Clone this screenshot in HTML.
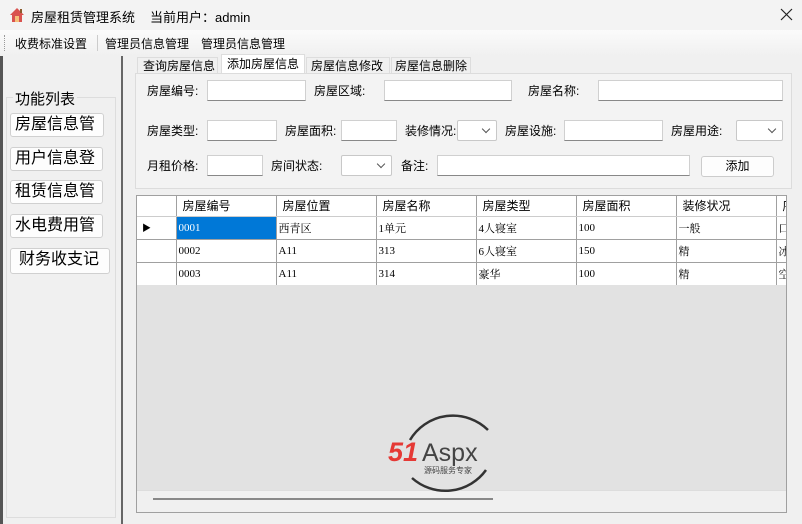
<!DOCTYPE html><html><head><meta charset="utf-8"><style>
*{margin:0;padding:0;box-sizing:border-box}
body{width:802px;height:524px;background:#f0f0f0;font-family:"Liberation Sans","Noto Sans CJK SC",sans-serif;font-size:12px;color:#000;position:relative;overflow:hidden}
.a{position:absolute;white-space:nowrap}
.in{position:absolute;background:#fff;border:1px solid #d0d0d0;border-bottom:1px solid #888;height:21px}
.sel{position:absolute;background:#fff;border:1px solid #c8c8c8;height:21px;border-radius:2px}
.sel:after{content:"";position:absolute;right:7px;top:5px;width:5px;height:5px;border-right:1px solid #555;border-bottom:1px solid #555;transform:rotate(45deg)}
.lb{position:absolute;font-size:12px;white-space:nowrap}
.btn{position:absolute;background:#fdfdfd;border:1px solid #d0d0d0;border-radius:3px;font-size:16px;padding-left:4px;line-height:22px}
table{border-collapse:collapse;position:absolute;left:0;top:0;background:#fff;table-layout:fixed;width:739px}
td{border:1px solid #a0a0a0;border-top:none;border-left:none;height:23px;font-size:11px;padding-left:2px;font-family:"Liberation Serif","Noto Serif CJK SC",serif;overflow:hidden;white-space:nowrap}
tr.h td{height:20px;font-size:12px;padding-left:6px;font-family:"Liberation Sans","Noto Sans CJK SC",sans-serif;border-bottom:1px solid #ccc}
</style></head><body>
<div class="a" style="left:0;top:0;width:802px;height:30px;background:#f3f3f3"></div>
<div class="a" style="left:9px;top:7px;width:16px;height:16px">
<svg width="16" height="16"><polygon points="8,1 1,8 3,8 3,15 13,15 13,8 15,8" fill="#d9534f"/><rect x="6" y="9" width="4" height="6" fill="#f5c07a"/><rect x="11" y="2" width="2" height="4" fill="#8b5a2b"/></svg></div>
<div class="a" style="left:31px;top:7px;font-size:13px">房屋租赁管理系统</div>
<div class="a" style="left:150px;top:7px;font-size:13px">当前用户：admin</div>
<svg class="a" style="left:780px;top:8px" width="13" height="13"><path d="M1 1L12 12M12 1L1 12" stroke="#222" stroke-width="1.2"/></svg>
<div class="a" style="left:0;top:30px;width:802px;height:26px;background:linear-gradient(#fbfbfb,#f0f0f0)"></div>
<div class="a" style="left:4px;top:35px;height:16px;border-left:1px dotted #999"></div>
<div class="a" style="left:15px;top:35px;font-size:12px">收费标准设置</div>
<div class="a" style="left:97px;top:35px;height:16px;border-left:1px solid #ccc"></div>
<div class="a" style="left:105px;top:35px;font-size:12px">管理员信息管理</div>
<div class="a" style="left:201px;top:35px;font-size:12px">管理员信息管理</div>
<div class="a" style="left:0;top:56px;width:3px;height:468px;background:#555"></div>
<div class="a" style="left:6px;top:97px;width:110px;height:421px;border:1px solid #ddd;border-top:none"></div>
<div class="a" style="left:6px;top:97px;width:110px;border-top:1px solid #ddd"></div>
<div class="a" style="left:13px;top:88px;font-size:15px;background:#f0f0f0;padding:0 2px">功能列表</div>
<div class="btn" style="left:10px;top:113px;width:94px;height:24px">房屋信息管</div>
<div class="btn" style="left:10px;top:147px;width:93px;height:24px">用户信息登</div>
<div class="btn" style="left:10px;top:180px;width:93px;height:24px">租赁信息管</div>
<div class="btn" style="left:10px;top:214px;width:93px;height:24px">水电费用管</div>
<div class="btn" style="left:10px;top:248px;width:100px;height:26px;padding-left:8px">财务收支记</div>
<div class="a" style="left:121px;top:56px;width:2px;height:468px;background:#666"></div>
<div class="a" style="left:137px;top:57px;width:81px;height:17px;border:1px solid #ddd;border-bottom:none;padding-left:5px;font-size:12px;line-height:17px">查询房屋信息</div>
<div class="a" style="left:221px;top:54px;width:84px;height:20px;background:#fff;border:1px solid #ddd;border-bottom:none;padding-left:5px;font-size:12px;line-height:18px">添加房屋信息</div>
<div class="a" style="left:306px;top:57px;width:84px;height:17px;border:1px solid #ddd;border-bottom:none;padding-left:4px;font-size:12px;line-height:17px">房屋信息修改</div>
<div class="a" style="left:391px;top:57px;width:80px;height:17px;border:1px solid #ddd;border-bottom:none;padding-left:3px;font-size:12px;line-height:17px">房屋信息删除</div>
<div class="a" style="left:135px;top:73px;width:657px;height:116px;background:#f3f3f3;border:1px solid #dcdcdc"></div>
<div class="lb" style="left:147px;top:82px">房屋编号:</div><div class="in" style="left:207px;top:80px;width:99px"></div>
<div class="lb" style="left:314px;top:82px">房屋区域:</div><div class="in" style="left:384px;top:80px;width:128px"></div>
<div class="lb" style="left:528px;top:82px">房屋名称:</div><div class="in" style="left:598px;top:80px;width:185px"></div>
<div class="lb" style="left:147px;top:122px">房屋类型:</div><div class="in" style="left:207px;top:120px;width:70px"></div>
<div class="lb" style="left:285px;top:122px">房屋面积:</div><div class="in" style="left:341px;top:120px;width:56px"></div>
<div class="lb" style="left:405px;top:122px">装修情况:</div><div class="sel" style="left:457px;top:120px;width:40px"></div>
<div class="lb" style="left:505px;top:122px">房屋设施:</div><div class="in" style="left:564px;top:120px;width:99px"></div>
<div class="lb" style="left:671px;top:122px">房屋用途:</div><div class="sel" style="left:736px;top:120px;width:47px"></div>
<div class="lb" style="left:147px;top:157px">月租价格:</div><div class="in" style="left:207px;top:155px;width:56px"></div>
<div class="lb" style="left:271px;top:157px">房间状态:</div><div class="sel" style="left:341px;top:155px;width:51px"></div>
<div class="lb" style="left:401px;top:157px">备注:</div><div class="in" style="left:437px;top:155px;width:253px"></div>
<div class="a" style="left:701px;top:156px;width:73px;height:21px;background:#fdfdfd;border:1px solid #ccc;border-radius:3px;text-align:center;line-height:19px;font-size:12px">添加</div>
<div class="a" style="left:136px;top:195px;width:651px;height:318px;background:#e2e2e2;border:1px solid #a0a0a0;overflow:hidden"></div>
<div class="a" style="left:137px;top:196px;width:649px;height:89px;overflow:hidden">
<table>
<colgroup><col style="width:39px"><col style="width:100px"><col style="width:100px"><col style="width:100px"><col style="width:100px"><col style="width:100px"><col style="width:100px"><col style="width:100px"></colgroup>
<tr class="h"><td></td><td>房屋编号</td><td>房屋位置</td><td>房屋名称</td><td>房屋类型</td><td>房屋面积</td><td>装修状况</td><td>序</td></tr>
<tr><td style="font-size:9px;padding-left:5px">▶</td><td style="background:#0078d7;color:#fff">0001</td><td>西青区</td><td>1单元</td><td>4人寝室</td><td>100</td><td>一般</td><td>口</td></tr>
<tr><td></td><td>0002</td><td>A11</td><td>313</td><td>6人寝室</td><td>150</td><td>精</td><td>冰</td></tr>
<tr><td></td><td>0003</td><td>A11</td><td>314</td><td>豪华</td><td>100</td><td>精</td><td>空</td></tr>
</table></div>
<div class="a" style="left:137px;top:490px;width:649px;height:22px;background:#f0f0f0;border-top:1px solid #ddd"></div>
<div class="a" style="left:153px;top:498px;width:340px;height:2px;background:#888"></div>
<svg class="a" style="left:380px;top:400px" width="140" height="105">
<path d="M30 40 A50 50 0 0 1 108 30" stroke="#333" stroke-width="2.5" fill="none"/>
<path d="M106 70 A50 50 0 0 1 32 78" stroke="#333" stroke-width="2.5" fill="none"/>
<text x="8" y="61" font-size="27" font-weight="bold" font-style="italic" fill="#e53935" font-family="Liberation Sans">51</text>
<text x="42" y="61" font-size="25" fill="#444" font-family="Liberation Sans">Aspx</text>
<text x="44" y="73" font-size="8" fill="#444" font-family="Noto Sans CJK SC">源码服务专家</text>
</svg>
</body></html>
